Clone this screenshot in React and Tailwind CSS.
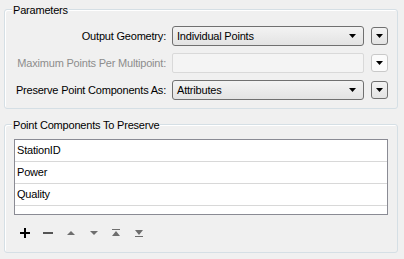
const font = { fontFamily: '"Liberation Sans", Arial, sans-serif' };

function Arrow({ className = "" }) {
  return (
    <svg width="7" height="4" viewBox="0 0 7 4" className={className}>
      <path d="M0 0H7L3.5 4Z" fill="currentColor" />
    </svg>
  );
}

function Combo({ value, disabled }) {
  if (disabled) {
    return <div className="h-[20px] rounded-[2px] border border-[#d9d9d9] bg-[#f4f4f4]" />;
  }
  return (
    <div className="flex h-[20px] items-center justify-between rounded-[3px] border border-[#707070] bg-gradient-to-b from-[#f3f3f3] to-[#e3e3e3] pl-[4px] pr-[7px] text-black">
      <span>{value}</span>
      <Arrow className="text-black" />
    </div>
  );
}

function SmallBtn({ disabled }) {
  return (
    <div
      className={
        "flex h-[18px] w-[17px] items-center justify-center rounded-[3px] border " +
        (disabled
          ? "border-[#c9c9c9] bg-[#fbfbfb]"
          : "border-[#707070] bg-gradient-to-b from-[#f3f3f3] to-[#e3e3e3]")
      }
    >
      <Arrow className="text-black" />
    </div>
  );
}

function Group({ title, className, children }) {
  return (
    <div className={"relative rounded-[3px] border border-[#d5dfe5] shadow-[inset_1px_1px_0_#fff] " + className}>
      <span className="absolute left-[7px] top-[-7px] bg-[#f0f0f0] px-[1px] leading-[14px] text-black">
        {title}
      </span>
      {children}
    </div>
  );
}

function ParamRow({ label, value, disabled }) {
  return (
    <>
      <div className={"whitespace-nowrap text-right " + (disabled ? "text-[#8d8d8d]" : "text-black")}>{label}</div>
      <Combo value={value} disabled={disabled} />
      <SmallBtn disabled={disabled} />
    </>
  );
}

export default function App() {
  return (
    <div className="h-[259px] w-[404px] bg-[#f0f0f0] text-[11px] tracking-[-0.2px]" style={font}>
      <div className="px-[4px] pt-[9px]">
        <Group title="Parameters" className="h-[100px] w-[394px]">
          <div className="grid grid-cols-[154px_192px_17px] items-center gap-x-[6px] gap-y-[7px] pl-[7px] pt-[16px] [&>*:nth-child(3n)]:ml-[1px]">
            <ParamRow label="Output Geometry:" value="Individual Points" />
            <ParamRow label="Maximum Points Per Multipoint:" disabled />
            <ParamRow label="Preserve Point Components As:" value="Attributes" />
          </div>
        </Group>
        <Group title="Point Components To Preserve" className="mt-[15px] h-[129px] w-[394px]">
          <div className="mx-[9px] mt-[14px] h-[76px] border border-[#8a8b94] bg-white">
            {["StationID", "Power", "Quality"].map((r) => (
              <div key={r} className="flex h-[22px] items-center border-b border-[#d8d8d8] pl-[2px] text-black">
                {r}
              </div>
            ))}
          </div>
          <div className="flex items-center pl-[15px] pt-[13px]">
            <svg width="10" height="10" viewBox="0 0 10 10">
              <path d="M4 0h2v10H4zM0 4h10v2H0z" fill="#000" />
            </svg>
            <svg width="10" height="10" viewBox="0 0 10 10" className="ml-[13px]">
              <path d="M0 4h10v2H0z" fill="#555" />
            </svg>
            <svg width="8" height="10" viewBox="0 0 8 10" className="ml-[14px]">
              <path d="M0 7L4 3L8 7Z" fill="#6e6e6e" />
            </svg>
            <svg width="8" height="10" viewBox="0 0 8 10" className="ml-[15px]">
              <path d="M0 3L4 7L8 3Z" fill="#6e6e6e" />
            </svg>
            <svg width="8" height="10" viewBox="0 0 8 10" className="ml-[14px]">
              <path d="M0 1h8v1H0zM0 8L4 3L8 8Z" fill="#6e6e6e" />
            </svg>
            <svg width="8" height="10" viewBox="0 0 8 10" className="ml-[15px]">
              <path d="M0 2L4 7L8 2ZM0 8h8v1H0z" fill="#6e6e6e" />
            </svg>
          </div>
        </Group>
      </div>
    </div>
  );
}
